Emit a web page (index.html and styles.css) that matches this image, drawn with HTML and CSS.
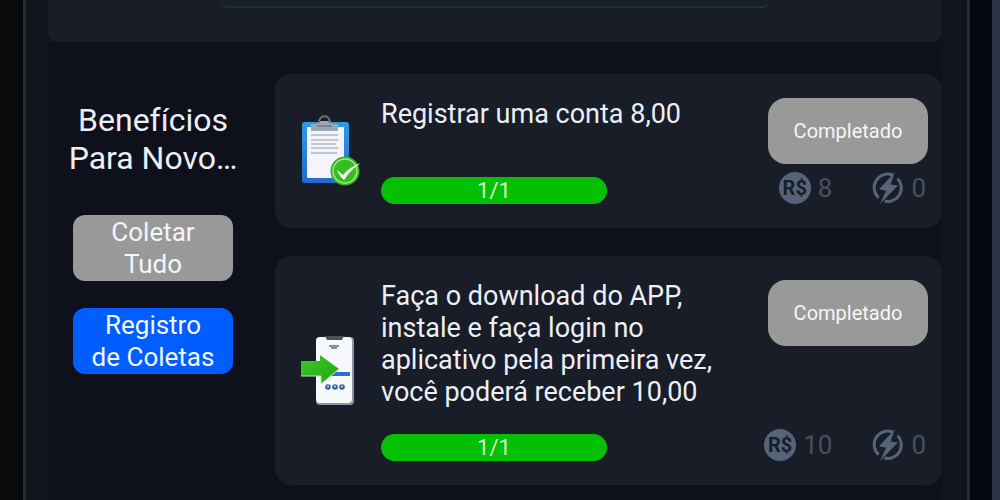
FILE: index.html
```html
<!DOCTYPE html>
<html lang="pt-BR">

<head>
    <meta charset="UTF-8">
    <meta name="viewport" content="width=device-width, initial-scale=1.0">
    <title>Benefícios</title>
    <link rel="stylesheet" href="styles.css">
</head>

<body>
    <svg width="0" height="0" class="defs" aria-hidden="true">
        <symbol id="bolt" viewBox="0 0 32 32">
            <path d="M20.500 3A13.500 13.500 0 0 0 6.600 25.600" fill="none" stroke="currentColor" stroke-width="3" />
            <path d="M25.500 6.500A13.500 13.500 0 0 1 12.500 29" fill="none" stroke="currentColor" stroke-width="3" />
            <path d="M23 0L7 17.200L14 18.700L8 32L26 13.600L18.500 12.400Z" fill="currentColor" />
        </symbol>
    </svg>

    <main class="frame">
        <section class="top-panel">
            <div class="top-box"></div>
        </section>

        <div class="content">
            <aside class="sidebar">
                <h2>Benefícios<br>Para Novo…</h2>
                <button class="btn btn-gray">Coletar Tudo</button>
                <button class="btn btn-blue">Registro de Coletas</button>
            </aside>

            <div class="tasks">
                <article class="card">
                    <svg class="card-icon" viewBox="0 0 60 72" aria-hidden="true">
                        <defs>
                            <linearGradient id="board" x1="0" y1="0" x2="0" y2="1">
                                <stop offset="0" stop-color="#2f9be0" />
                                <stop offset="1" stop-color="#2468cf" />
                            </linearGradient>
                        </defs>
                        <rect x="1" y="7" width="47" height="61" rx="3" fill="url(#board)" />
                        <rect x="6" y="12" width="37" height="51" rx="1" fill="#f3f5fa" />
                        <path d="M10 16H37V9H32L28 6H19L15 9H10Z" fill="#9aa9b6" />
                        <path d="M18 8C18 -1 29 -1 29 8" fill="none" stroke="#68747e" stroke-width="2" />
                        <path d="M16 11H31" stroke="#77858f" stroke-width="2" />
                        <path d="M10 20H37M10 25H37M10 29H35M10 33H37M10 38H36" stroke="#c3c6cc" stroke-width="2" />
                        <circle cx="44" cy="56" r="14.500" fill="#35b51c" />
                        <circle cx="44" cy="56" r="12" fill="#36bd20" stroke="#a5e68c" stroke-width="1.5" />
                        <path d="M36 55L42 60Q48 52 60 48Q49 55 43 65Q39 62 36 55Z" fill="#fff" />
                    </svg>
                    <div class="card-body">
                        <p>Registrar uma conta 8,00</p>
                        <div class="progress">1/1</div>
                    </div>
                    <div class="card-side">
                        <button class="btn btn-done">Completado</button>
                        <div class="rewards">
                            <span class="reward"><span class="coin">R$</span>8</span>
                            <span class="reward"><svg class="bolt"><use href="#bolt" /></svg>0</span>
                        </div>
                    </div>
                </article>

                <article class="card">
                    <svg class="card-icon" viewBox="0 0 60 72" aria-hidden="true">
                        <defs>
                            <linearGradient id="arrow" x1="0" y1="0" x2="1" y2="1">
                                <stop offset="0" stop-color="#3cc928" />
                                <stop offset="1" stop-color="#20a414" />
                            </linearGradient>
                        </defs>
                        <rect x="15" y="2" width="38" height="68" rx="4" fill="#8997a8" />
                        <rect x="15" y="2" width="36" height="66" rx="4" fill="#f7f9fd" />
                        <path d="M24 1H43L41 5H26Z" fill="#49515e" />
                        <path d="M28 11H38M30 13H36" stroke="#8b9099" stroke-width="2" />
                        <path d="M31 39H49" stroke="#2d6fd3" stroke-width="4" />
                        <g fill="#2e62ac">
                            <circle cx="27" cy="52" r="2.800" />
                            <circle cx="34" cy="52" r="2.800" />
                            <circle cx="41" cy="52" r="2.800" />
                        </g>
                        <g fill="#d5e2f5">
                            <circle cx="27" cy="51.500" r="1" />
                            <circle cx="34" cy="51.500" r="1" />
                            <circle cx="41" cy="51.500" r="1" />
                        </g>
                        <path d="M0 26H19V20L38 34L20 49V41H0Z" fill="url(#arrow)" />
                        <path d="M0 41H20V49L38 34" fill="none" stroke="#bfeab8" stroke-width="1" />
                    </svg>
                    <div class="card-body">
                        <p>Faça o download do APP, instale e faça login no aplicativo pela primeira vez, você poderá receber 10,00</p>
                        <div class="progress">1/1</div>
                    </div>
                    <div class="card-side">
                        <button class="btn btn-done">Completado</button>
                        <div class="rewards">
                            <span class="reward"><span class="coin">R$</span>10</span>
                            <span class="reward"><svg class="bolt"><use href="#bolt" /></svg>0</span>
                        </div>
                    </div>
                </article>
            </div>
        </div>
    </main>
</body>

</html>
```
FILE: styles.css
```css
* {
    padding: 0;
    margin: 0;
    box-sizing: border-box;
}

body {
    min-height: 100vh;
    padding: 0 22px 0 23px;
    border-right: 8px solid #293247;
    background: linear-gradient(90deg, #0a0a0b 0, #0a0a0b 12px, #05070e 24px, #05070e 100%) no-repeat;
    font-family: Roboto, "Liberation Sans", sans-serif;
    font-size: 26px;
    line-height: 32px;
    color: #eceff6;
}

.defs {
    position: absolute;
}

.frame {
    min-height: 100vh;
    padding: 0 25px 0 22px;
    border-left: 3px solid #272b34;
    border-right: 3px solid #272b34;
    background-color: #0f141d;
}

.top-panel {
    padding: 0 172px 34px;
    border-radius: 0 0 10px 10px;
    background-color: #181d28;
}

.top-box {
    height: 8px;
    border-bottom: 2px solid #222c37;
    border-radius: 0 0 16px 16px;
    background-color: #15202b;
}

.content {
    display: flex;
    gap: 17px;
    padding: 32px 0 15px;
    background-color: #0e111b;
}

.sidebar {
    display: flex;
    flex-direction: column;
    align-items: center;
    gap: 27px;
    width: 210px;
    padding-top: 27px;
}

.sidebar h2 {
    margin-bottom: 11px;
    font-size: 32px;
    line-height: 38px;
    font-weight: normal;
    text-align: center;
}

.btn {
    width: 160px;
    height: 66px;
    padding: 0 16px;
    border: none;
    border-radius: 12px;
    font-family: inherit;
    font-size: 26px;
    line-height: 32px;
    color: #f4f6fa;
    cursor: pointer;
}

.btn-gray,
.btn-done {
    background-color: #999;
}

.btn-blue {
    background-color: #005dfe;
}

.btn-done {
    border-radius: 18px;
    font-size: 20px;
}

.tasks {
    display: flex;
    flex: 1;
    flex-direction: column;
    gap: 28px;
}

.card {
    display: flex;
    gap: 20px;
    padding: 24px 14px 24px 26px;
    border-radius: 16px;
    background-color: #181d28;
}

.card-icon {
    align-self: center;
    width: 60px;
    height: 72px;
}

.card-body {
    display: flex;
    flex: 1;
    flex-direction: column;
    justify-content: space-between;
    gap: 26px;
}

.card-body p {
    font-size: 27px;
}

.progress {
    width: 226px;
    height: 27px;
    border-radius: 14px;
    background-color: #03c003;
    font-size: 22px;
    line-height: 27px;
    text-align: center;
    color: #d5f5d5;
}

.card-side {
    display: flex;
    flex-direction: column;
    align-items: flex-end;
    justify-content: space-between;
    gap: 8px;
}

.rewards {
    display: flex;
    gap: 40px;
    padding-right: 2px;
    color: #47515f;
}

.reward {
    display: flex;
    align-items: center;
    gap: 7px;
}

.coin {
    width: 32px;
    height: 32px;
    border-radius: 50%;
    background-color: #56647a;
    font-size: 20px;
    font-weight: bold;
    text-align: center;
    color: #181d28;
}

.bolt {
    width: 32px;
    height: 32px;
    color: #56647a;
}
```
